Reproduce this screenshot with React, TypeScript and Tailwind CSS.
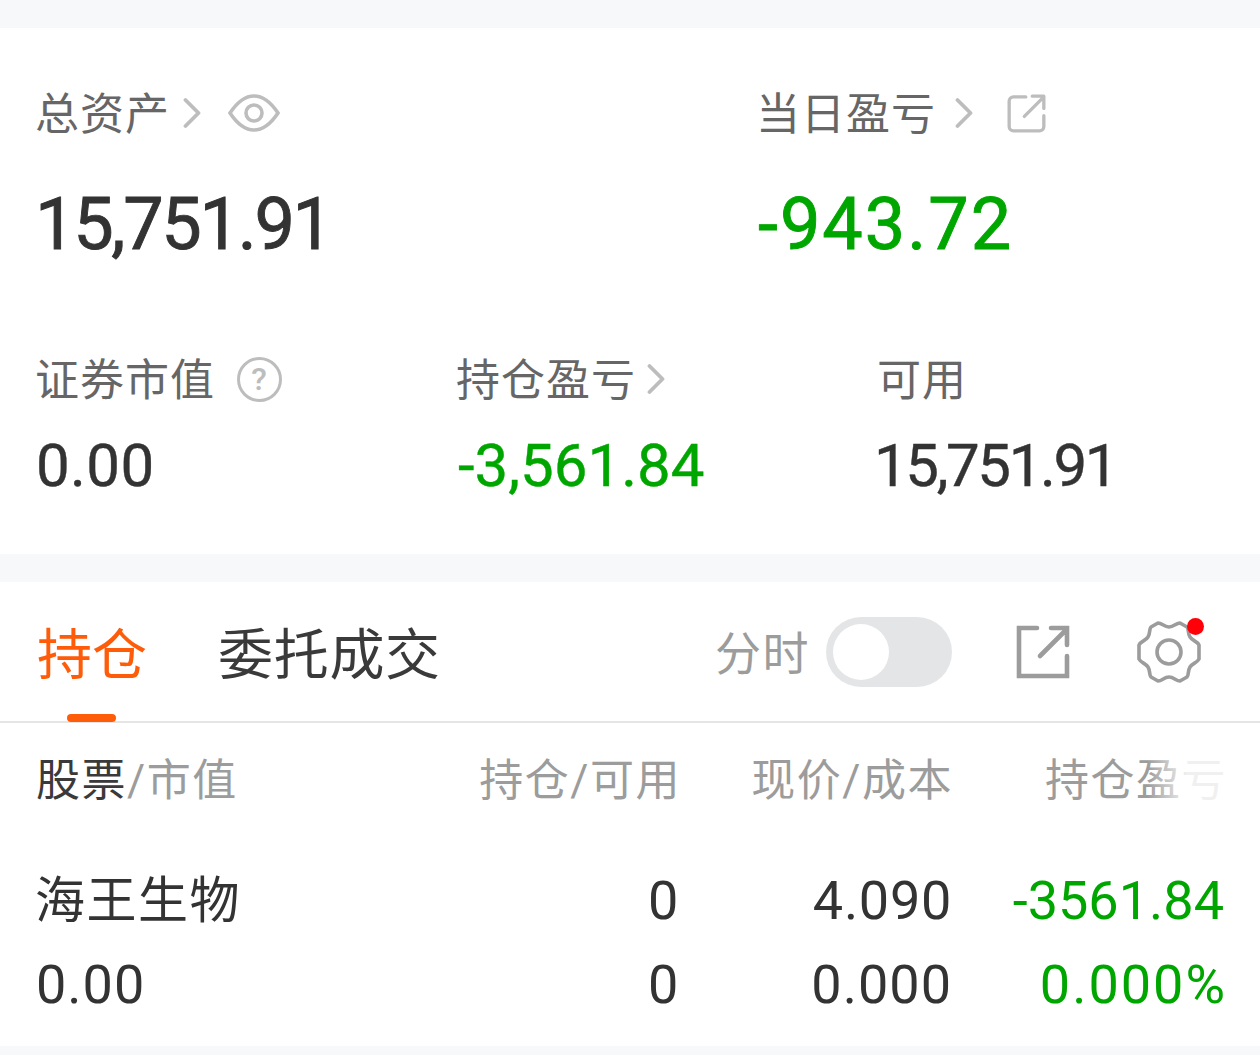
const cjk = "font-['Roboto','Noto_Sans_CJK_SC',sans-serif]";

function Chevron({ className }: { className: string }) {
  return (
    <svg className={className} viewBox="0 0 18 32" fill="none" stroke="#bdbdbd" strokeWidth="3.8" strokeLinecap="round" strokeLinejoin="round">
      <path d="M2.5 3 L15.5 16 L2.5 29" />
    </svg>
  );
}

function Share({ className, color, width, rounded }: { className: string; color: string; width: number; rounded?: boolean }) {
  return (
    <svg className={className} viewBox="0 0 54 54" fill="none" stroke={color} strokeWidth={width} strokeLinecap="round" strokeLinejoin={rounded ? "round" : "miter"}>
      {rounded ? (
        <path d="M26 4 H9 a6 6 0 0 0 -6 6 V45 a6 6 0 0 0 6 6 H45 a6 6 0 0 0 6 -6 V30" />
      ) : (
        <path d="M21 3 H3 V51 H51 V31" />
      )}
      <path d="M24 31 L50 5 M35 3 H51 V20" />
    </svg>
  );
}

function Gear() {
  return (
    <svg className="w-[64px] h-[64px]" viewBox="0 0 64 64" fill="none" stroke="#9c9c9c" strokeWidth="3.6" strokeLinejoin="round">
      <path d="M21 3 C25 3 27 7 32 7 C37 7 39 3 43 3 L50 7 C52 9 50.5 13 53 17 C55.5 21 60 21 62 25 L62 39 C60 43 55.5 43 53 47 C50.5 51 52 55 50 57 L43 61 C39 61 37 57 32 57 C27 57 25 61 21 61 L14 57 C12 55 13.5 51 11 47 C8.500 43 4 43 2 39 L2 25 C4 21 8.500 21 11 17 C13.5 13 12 9 14 7 Z" />
      <circle cx="32" cy="32" r="12" />
    </svg>
  );
}

function Metric({ label, value, color, valueClass, children, className, big }: { label: string; value: string; color: string; valueClass: string; big?: boolean; children?: React.ReactNode; className: string }) {
  return (
    <div className={className}>
      <div className={`flex items-center h-[50px] text-[44px] leading-[50px] text-[#666666] tracking-[1px] ${cjk}`}>
        <span className="pt-[3px]">{label}</span>
        {children}
      </div>
      <div
        className={`font-['Roboto',sans-serif] whitespace-nowrap ${color} ${valueClass} ${
          big ? "mt-[47px] h-[80px] text-[72px] leading-[80px] [-webkit-text-stroke:0.9px]" : "mt-[30px] h-[64px] text-[60px] leading-[64px] [-webkit-text-stroke:0.4px]"
        }`}
      >
        {value}
      </div>
    </div>
  );
}

export default function App() {
  return (
    <div className={`w-[1260px] h-[1055px] overflow-hidden bg-[#f7f8fa] flex flex-col ${cjk}`}>
      <div className="h-[28px] shrink-0" />
      <section className="h-[526px] shrink-0 bg-white pl-[35px]">
        <div className="flex pt-[60px]">
          <Metric className="w-[721px]" label="总资产" value="15,751.91" color="text-[#333333]" valueClass="tracking-[-2.3px]" big>
            <Chevron className="ml-[13px] w-[18px] h-[32px]" />
            <svg className="ml-[27px] w-[52px] h-[38px]" viewBox="0 0 52 38" fill="none" stroke="#bdbdbd" strokeWidth="3.6">
              <path d="M2 19 C10 7 17 2 26 2 C35 2 42 7 50 19 C42 31 35 36 26 36 C17 36 10 31 2 19 Z" />
              <circle cx="26" cy="19" r="8" />
            </svg>
          </Metric>
          <Metric className="w-[480px]" label="当日盈亏" value="-943.72" color="text-[#00a600]" valueClass="tracking-[2px] ml-[2px]" big>
            <Chevron className="ml-[19px] w-[18px] h-[32px]" />
            <Share className="ml-[34px] w-[39px] h-[39px]" color="#bdbdbd" width={4.6} rounded />
          </Metric>
        </div>
        <div className="flex mt-[89px]">
          <Metric className="w-[421px]" label="证券市值" value="0.00" color="text-[#333333]" valueClass="tracking-[0.4px] ml-[1px]">
            <span className="ml-[22px] w-[45px] h-[45px] rounded-full border-[3px] border-[#bdbdbd] text-[#bdbdbd] text-[32px] leading-[39px] font-medium text-center">?</span>
          </Metric>
          <Metric className="w-[421px]" label="持仓盈亏" value="-3,561.84" color="text-[#00a600]" valueClass="tracking-[0px] ml-[2px]">
            <Chevron className="ml-[11px] w-[18px] h-[32px]" />
          </Metric>
          <Metric className="w-[380px]" label="可用" value="15,751.91" color="text-[#333333]" valueClass="tracking-[-2.4px] ml-[-3px]" />
        </div>
      </section>
      <div className="h-[28px] shrink-0" />
      <section className="h-[464px] shrink-0 bg-white flex flex-col">
        <div className="relative h-[141px] shrink-0 border-b-[2px] border-[#e5e5e5] flex items-center pl-[37px]">
          <span className="text-[55px] leading-[64px] pt-[6px] text-[#ff5c0a] w-[181px]">持仓</span>
          <span className="text-[55px] leading-[64px] pt-[6px] text-[#3a3a3a] tracking-[0.7px] w-[497px]">委托成交</span>
          <span className="text-[46px] leading-[50px] pt-[4px] text-[#9c9c9c] tracking-[1.5px] w-[111px]">分时</span>
          <div className="w-[126px] h-[70px] rounded-full bg-[#e4e5e7] p-[7px]">
            <div className="w-[56px] h-[56px] rounded-full bg-white" />
          </div>
          <Share className="ml-[64px] w-[54px] h-[54px]" color="#9c9c9c" width={4.6} />
          <div className="relative ml-[67px]">
            <Gear />
            <div className="absolute right-[-3px] top-[-2px] w-[17px] h-[17px] rounded-full bg-[#ff0008]" />
          </div>
          <div className="absolute left-[67px] bottom-[-1px] w-[49px] h-[8px] rounded-full bg-[#ff5c0a]" />
        </div>
        <div className="grid grid-cols-[681px_272px_274px] h-[74px] items-center text-[44px] leading-[50px] text-[#9c9c9c] tracking-[1.5px] pt-[21px] box-content">
          <div className="flex justify-between pl-[36px]">
            <span><span className="text-[#3a3a3a]">股票</span>/市值</span>
            <span>持仓/可用</span>
          </div>
          <div className="text-right">现价/成本</div>
          <div className="text-right whitespace-nowrap overflow-hidden relative">
            持仓盈亏
            <div className="absolute right-0 top-0 bottom-0 w-[80px] bg-gradient-to-r from-white/0 via-white/85 to-white/85" />
          </div>
        </div>
        <div className="grid grid-cols-[679px_273px_272px] mt-[41px] text-[#333333] text-[54px] leading-[84px] tracking-[0.7px]">
          <div className="flex justify-between pl-[35px]">
            <span className="text-[50px] tracking-[1.5px]">海王生物</span>
            <span>0</span>
          </div>
          <div className="text-right">4.090</div>
          <div className="text-right text-[#00a600] tracking-[0px]">-3561.84</div>
          <div className="flex justify-between pl-[36px]">
            <span className="tracking-[1px]">0.00</span>
            <span>0</span>
          </div>
          <div className="text-right tracking-[1px]">0.000</div>
          <div className="text-right text-[#00a600] tracking-[2px] mr-[-3px]">0.000%</div>
        </div>
      </section>
    </div>
  );
}
